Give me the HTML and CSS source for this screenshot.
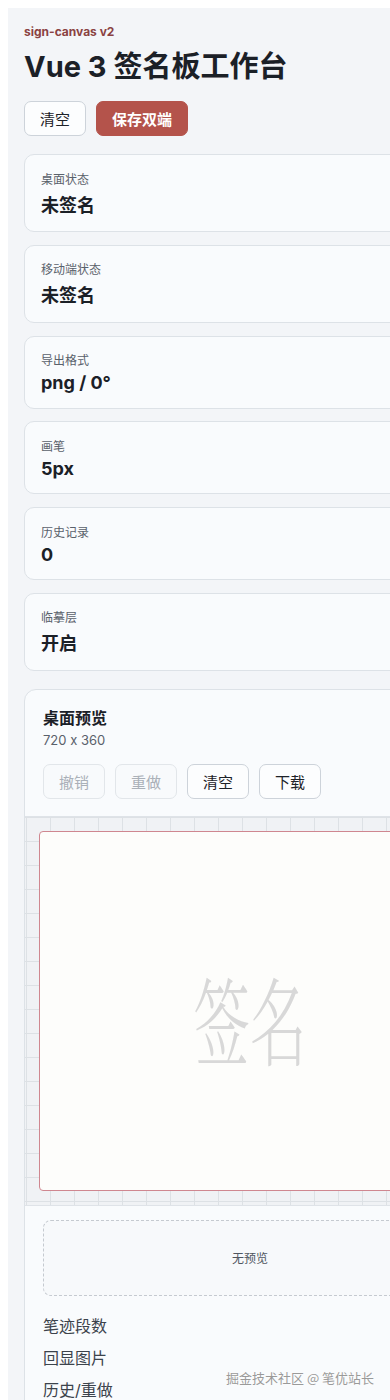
FILE: index.html
```html
<!DOCTYPE html>
<html lang="zh-CN">
<head>
<meta charset="utf-8">
<title>Vue 3 签名板工作台</title>
<link rel="stylesheet" href="styles.css">
</head>
<body>
<div class="app">
  <header class="hero">
    <p class="eyebrow">sign-canvas v2</p>
    <h1 class="title">Vue 3 签名板工作台</h1>
    <div class="actions">
      <button class="btn">清空</button>
      <button class="btn btn-primary">保存双端</button>
    </div>
  </header>

  <section class="stats">
    <div class="stat"><span class="stat-label">桌面状态</span><strong class="stat-value">未签名</strong></div>
    <div class="stat"><span class="stat-label">移动端状态</span><strong class="stat-value">未签名</strong></div>
    <div class="stat"><span class="stat-label">导出格式</span><strong class="stat-value">png / 0°</strong></div>
    <div class="stat"><span class="stat-label">画笔</span><strong class="stat-value">5px</strong></div>
    <div class="stat"><span class="stat-label">历史记录</span><strong class="stat-value">0</strong></div>
    <div class="stat"><span class="stat-label">临摹层</span><strong class="stat-value">开启</strong></div>
  </section>

  <section class="panel">
    <div class="panel-head">
      <h2 class="panel-title">桌面预览</h2>
      <p class="panel-sub">720 x 360</p>
      <div class="toolbar">
        <button class="btn" disabled>撤销</button>
        <button class="btn" disabled>重做</button>
        <button class="btn">清空</button>
        <button class="btn">下载</button>
      </div>
    </div>
    <div class="stage">
      <div class="canvas"><span class="canvas-hint">签名</span></div>
    </div>
    <div class="panel-body">
      <div class="preview-empty">无预览</div>
      <ul class="meta">
        <li class="meta-row">笔迹段数</li>
        <li class="meta-row">回显图片</li>
        <li class="meta-row">历史/重做</li>
      </ul>
    </div>
  </section>
</div>
<div class="juejin-mark">掘金技术社区 @ 笔优站长</div>
</body>
</html>
```
FILE: styles.css
```css
html {
  overflow: hidden;
  background: #ffffff;
}

body {
  margin: 8px 0 0 8px;
  background: #ffffff;
  font-family: Inter, "Noto Sans CJK SC", sans-serif;
  font-feature-settings: "calt" 0;
  color: #1d2228;
}

.app {
  width: 452px;
  padding: 16px;
  background: #f3f5f8;
  display: flex;
  flex-direction: column;
  gap: 18px;
}

.hero {
  display: flex;
  flex-direction: column;
}

.eyebrow {
  margin: 0;
  font-size: 12px;
  font-weight: 700;
  line-height: normal;
  color: #8a4242;
}

.title {
  margin: 4px 0 0;
  font-size: 29px;
  font-weight: 700;
  line-height: normal;
  color: #1b2027;
}

.actions {
  margin-top: 16px;
  display: flex;
  gap: 10px;
}

.btn {
  font: inherit;
  font-size: 15px;
  line-height: normal;
  padding: 6px 15px;
  border: 1px solid #cdd3da;
  border-radius: 7px;
  background: #fcfdfe;
  color: #1d2228;
}

.btn:disabled {
  color: #aab0b8;
  border-color: #e2e6ea;
  background: #f8fafc;
}

.btn-primary {
  background: #b4534b;
  border-color: #b4534b;
  color: #ffffff;
  font-weight: 700;
}

.stats {
  display: flex;
  flex-direction: column;
  gap: 12.8px;
}

.stat {
  display: flex;
  flex-direction: column;
  gap: 4px;
  padding: 14.5px 16px;
  border: 1px solid #dde2e7;
  border-radius: 10px;
  background: #f9fbfd;
}

.stat-label {
  font-size: 12px;
  line-height: normal;
  color: #59616b;
}

.stat-value {
  font-size: 18px;
  font-weight: 700;
  line-height: normal;
  color: #1b2027;
}

.panel {
  border: 1px solid #dde2e7;
  border-radius: 12px;
  background: #f9fbfd;
  overflow: hidden;
}

.panel-head {
  padding: 15px 18px 17px;
}

.panel-title {
  margin: 0;
  font-size: 16px;
  font-weight: 700;
  line-height: normal;
  color: #1b2027;
}

.panel-sub {
  margin: 3px 0 0;
  font-size: 13px;
  line-height: normal;
  color: #59616b;
}

.toolbar {
  margin-top: 16px;
  display: flex;
  gap: 10px;
}

.stage {
  padding: 14px;
  border-top: 1px solid #dfe3e8;
  border-bottom: 1px solid #dfe3e8;
  background-color: #f0f2f5;
  background-image:
    linear-gradient(to right, #dde1e5 1px, transparent 1px),
    linear-gradient(to bottom, #dde1e5 1px, transparent 1px);
  background-size: 24px 24px;
  background-position: 1px 0;
}

.canvas {
  box-sizing: border-box;
  height: 360px;
  border: 1px solid #cf8790;
  border-radius: 4px;
  background: #fdfdfb;
  display: flex;
  align-items: center;
  justify-content: center;
  overflow: hidden;
}

.canvas-hint {
  font-family: "Noto Serif CJK SC", "Noto Sans CJK SC", serif;
  font-size: 96px;
  font-weight: 300;
  line-height: 1;
  color: #d8d8d8;
  transform: translateY(6px) scaleX(0.586);
  white-space: nowrap;
}

.panel-body {
  padding: 14px 18px 18px;
}

.preview-empty {
  box-sizing: border-box;
  height: 76px;
  border: 1px dashed #c5cad0;
  border-radius: 8px;
  background: #f7f9fb;
  display: flex;
  align-items: center;
  justify-content: center;
  font-size: 12px;
  color: #4f5660;
}

.meta {
  margin: 14px 0 0;
  padding: 0;
  list-style: none;
}

.meta-row {
  padding: 4px 0;
  font-size: 16px;
  line-height: 24px;
  color: #3c434c;
}

.juejin-mark {
  position: absolute;
  left: 226px;
  top: 1369px;
  font-family: "Noto Sans CJK SC", sans-serif;
  font-size: 13px;
  line-height: 18px;
  color: #9a9a9a;
  text-shadow: 0 0 2px #ffffff, 0 0 1px #ffffff;
  white-space: nowrap;
}
```
